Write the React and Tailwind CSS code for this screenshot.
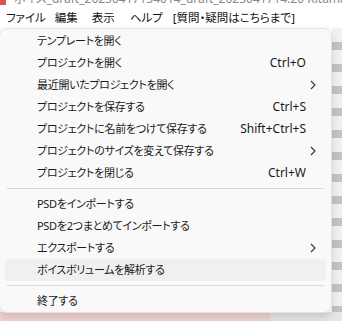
import React from "react";

const FONT = "font-['Noto_Sans','Noto_Sans_CJK_JP',sans-serif]";

function Chevron() {
  return (
    <svg width="6" height="10" viewBox="0 0 6 10" className="block">
      <path d="M1 1 L5 5 L1 9" fill="none" stroke="#333" strokeWidth="1.1" />
    </svg>
  );
}

function Row({ label, shortcut, sub, active }) {
  return (
    <div
      className={`flex h-[22px] items-center rounded-[4px] pl-[32px] ${
        active ? "bg-[#f0f0f0]" : ""
      }`}
    >
      <span className="flex-1 whitespace-nowrap text-[11px] tracking-[-0.3px]">{label}</span>
      {shortcut && (
        <span className="mr-[20px] whitespace-nowrap text-[12px]">{shortcut}</span>
      )}
      {sub && (
        <span className="mr-[10px]">
          <Chevron />
        </span>
      )}
    </div>
  );
}

function Sep({ h }) {
  return (
    <div className={`flex ${h} items-center px-[2px]`}>
      <div className="h-px w-full bg-[#d9d9d9]" />
    </div>
  );
}

export default function App() {
  return (
    <div
      className={`relative h-[321px] w-[342px] overflow-hidden bg-white text-[12px] text-[#1a1a1a] ${FONT} [font-feature-settings:'palt']`}
    >
      {/* title strip */}
      <div className="flex h-[7px] items-start overflow-hidden bg-white">
        <div className="h-[5px] w-[6px] shrink-0 bg-[#d9534f]" />
        <span className="ml-[8px] mt-[-7px] whitespace-nowrap text-[12px] leading-[12px] text-[#888]">
          ボイス_draft_20230417154014_draft_2023041714.20 Kitamaps
        </span>
      </div>
      {/* menu bar */}
      <div className="flex h-[21px] items-center whitespace-nowrap text-[11.5px] text-[#111]">
        <span className="ml-[6px]">ファイル</span>
        <span className="ml-[9px]">編集</span>
        <span className="ml-[14px]">表示</span>
        <span className="ml-[15px]">ヘルプ</span>
        <span className="ml-[10px]">[質問・疑問はこちらまで]</span>
      </div>
      {/* app body behind the menu */}
      <div className="flex h-[284px]">
        <div className="flex-1" />
        <div className="w-[10px] bg-[repeating-linear-gradient(to_bottom,#f2f2f2_0px,#f2f2f2_14px,#c4c4c4_14px,#c4c4c4_22px)]" />
      </div>
      <div className="flex h-[9px]">
        <div className="w-[270px] bg-[#f0d3d3]" />
        <div className="flex-1 bg-[#e6e6e6]" />
      </div>

      {/* dropdown menu */}
      <div className="absolute left-[-1px] top-[28px] h-[285px] w-[333px] rounded-[8px] border border-[#e3e3e3] bg-[#f9f9f9] px-[5px] pt-[1px] shadow-[0_4px_10px_rgba(0,0,0,0.14)]">
        <Row label="テンプレートを開く" />
        <Row label="プロジェクトを開く" shortcut="Ctrl+O" />
        <Row label="最近開いたプロジェクトを開く" sub />
        <Row label="プロジェクトを保存する" shortcut="Ctrl+S" />
        <Row label="プロジェクトに名前をつけて保存する" shortcut="Shift+Ctrl+S" />
        <Row label="プロジェクトのサイズを変えて保存する" sub />
        <Row label="プロジェクトを閉じる" shortcut="Ctrl+W" />
        <Sep h="h-[9px]" />
        <Row label="PSDをインポートする" />
        <Row label="PSDを2つまとめてインポートする" />
        <Row label="エクスポートする" sub />
        <Row label="ボイスボリュームを解析する" active />
        <Sep h="h-[9px]" />
        <Row label="終了する" />
      </div>
    </div>
  );
}
